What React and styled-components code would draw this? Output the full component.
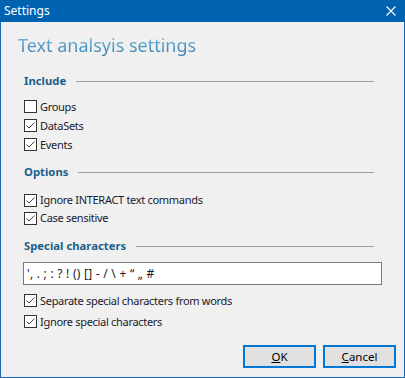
import React from "react";
import styled, { createGlobalStyle } from "styled-components";

const GlobalStyle = createGlobalStyle`
  html, body {
    margin: 0;
    padding: 0;
    background: #f0f0f0;
  }
  * {
    box-sizing: border-box;
  }
`;

const CheckIcon = () => (
  <svg width="11" height="11" viewBox="0 0 11 11">
    <polyline
      points="1.5,5.5 4,8 9.5,2.5"
      fill="none"
      stroke="#444"
      strokeWidth="1"
    />
  </svg>
);

const CloseIcon = () => (
  <svg width="10" height="10" viewBox="0 0 10 10">
    <path d="M0.5 0.5 L9.5 9.5 M9.5 0.5 L0.5 9.5" stroke="#fff" strokeWidth="1.1" />
  </svg>
);

const CheckRow = ({ label, checked, h }) => (
  <Row $h={h}>
    <Box>{checked && <CheckIcon />}</Box>
    <Label>{label}</Label>
  </Row>
);

const SectionTitle = ({ children, top }) => (
  <SectionHead $top={top}>
    <HeadText>{children}</HeadText>
    <HeadLine />
  </SectionHead>
);

const Hotkey = ({ k, rest }) => (
  <span>
    <u>{k}</u>
    {rest}
  </span>
);

const App = () => {
  return (
    <>
      <GlobalStyle />
      <Window>
        <TitleBar>
          <TitleText>Settings</TitleText>
          <CloseButton>
            <CloseIcon />
          </CloseButton>
        </TitleBar>
        <Heading>Text analsyis settings</Heading>
        <Body>
          <SectionTitle top={16}>Include</SectionTitle>
          <Rows $gap={8}>
            <CheckRow label="Groups" h={19} />
            <CheckRow label="DataSets" checked h={19} />
            <CheckRow label="Events" checked h={19} />
          </Rows>

          <SectionTitle top={10}>Options</SectionTitle>
          <Rows $gap={11}>
            <CheckRow label="Ignore INTERACT text commands" checked h={18} />
            <CheckRow label="Case sensitive" checked h={18} />
          </Rows>

          <SectionTitle top={11}>Special characters</SectionTitle>
          <CharsInput
            defaultValue={"', . ; : ? ! () [] - / \\ + \u201c \u201e #"}
            spellCheck={false}
          />
          <Rows $gap={5}>
            <CheckRow label="Separate special characters from words" checked h={21} />
            <CheckRow label="Ignore special characters" checked h={21} />
          </Rows>
        </Body>
        <Footer>
          <DialogButton>
            <Hotkey k="O" rest="K" />
          </DialogButton>
          <DialogButton>
            <Hotkey k="C" rest="ancel" />
          </DialogButton>
        </Footer>
      </Window>
    </>
  );
};

const Window = styled.div`
  width: 405px;
  height: 378px;
  display: flex;
  flex-direction: column;
  background: #f0f0f0;
  border: 1px solid #1468b4;
  border-top: none;
  font-family: "Noto Sans", "Open Sans", sans-serif;
  font-size: 11px;
  color: #1a1a1a;
`;

const TitleBar = styled.div`
  height: 22px;
  margin: 0 -1px;
  display: flex;
  align-items: center;
  justify-content: space-between;
  background: #0063b1;
  color: #fff;
  padding: 0 9px 0 4px;
`;

const TitleText = styled.span`
  line-height: 22px;
  font-size: 12px;
`;

const CloseButton = styled.div`
  display: flex;
  align-items: center;
  margin-top: -1px;
`;

const Heading = styled.h1`
  margin: 11px 0 0 17px;
  font-size: 18px;
  font-weight: 400;
  line-height: 24px;
  align-self: flex-start;
  background: linear-gradient(#86c3e6, #2a76aa);
  -webkit-background-clip: text;
  background-clip: text;
  color: transparent;
`;

const Body = styled.div`
  display: flex;
  flex-direction: column;
  padding: 0 22px;
`;

const SectionHead = styled.div`
  display: flex;
  align-items: center;
  gap: 10px;
  margin: ${(p) => p.$top}px 8px 0 1px;
  height: 16px;
`;

const HeadText = styled.span`
  font-size: 11.3px;
  font-weight: 700;
  color: #1b5f8c;
  line-height: 16px;
`;

const HeadLine = styled.div`
  flex: 1;
  height: 1px;
  background: #a0a0a0;
  margin-top: 1px;
`;

const Rows = styled.div`
  display: flex;
  flex-direction: column;
  margin-top: ${(p) => p.$gap}px;
`;

const Row = styled.div`
  display: flex;
  align-items: center;
  gap: 3px;
  height: ${(p) => p.$h}px;
  padding-left: 1px;
`;

const Box = styled.div`
  width: 13px;
  height: 13px;
  border: 1px solid #333;
  background: #fff;
  display: flex;
  align-items: center;
  justify-content: center;
`;

const Label = styled.span`
  line-height: 16px;
  letter-spacing: -0.3px;
  color: #1a1a2a;
`;

const CharsInput = styled.input`
  margin-top: 8px;
  height: 23px;
  width: 100%;
  border: 1px solid #7a7a7a;
  background: #fff;
  padding: 0 3px;
  font-family: "Noto Sans", "Open Sans", sans-serif;
  font-size: 12px;
  letter-spacing: 0.25px;
  color: #1a1a2a;
  outline: none;
`;

const Footer = styled.div`
  margin-top: auto;
  display: flex;
  justify-content: flex-end;
  gap: 7px;
  padding: 0 8px 9px 0;
`;

const DialogButton = styled.button`
  width: 73px;
  height: 23px;
  border: 2px solid #0078d7;
  background: #e1e1e1;
  font-family: "Noto Sans", "Open Sans", sans-serif;
  font-size: 11.5px;
  color: #000;
  padding: 0;
  display: flex;
  align-items: center;
  justify-content: center;
`;

export default App;
